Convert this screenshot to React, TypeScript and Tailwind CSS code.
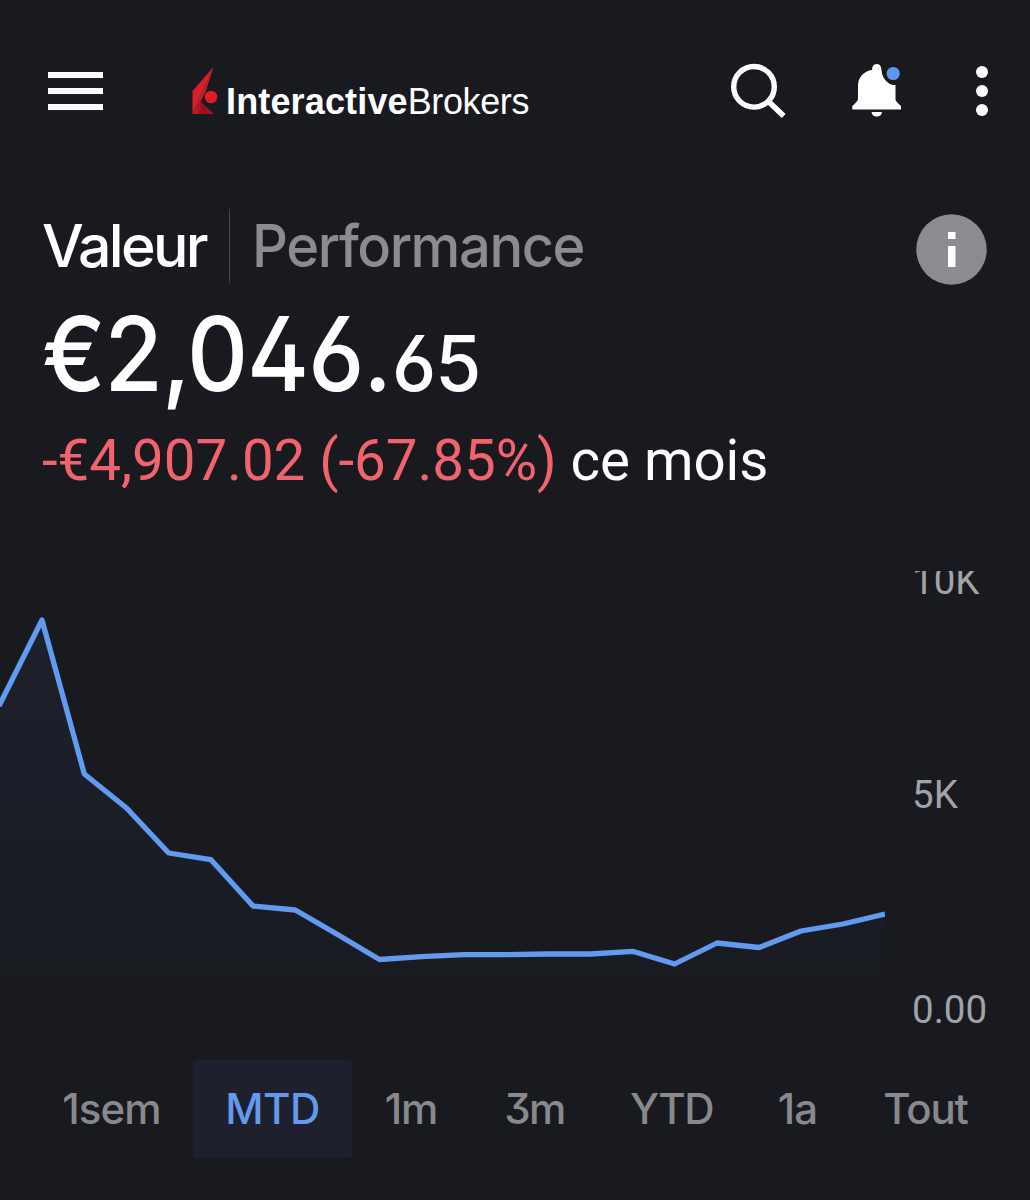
const POINTS: [number, number][] = [
  [-1, 706], [42, 620], [84.3, 774], [126.5, 808], [168.7, 853], [211, 859.7], [253, 906],
  [295.3, 910], [337.5, 934.5], [379.5, 959.5], [421.7, 956.7], [464, 954.6], [506, 954.6],
  [548, 954], [590.5, 954], [632.6, 951.3], [674.6, 964], [717, 943], [759, 947.5],
  [801, 931], [843, 924], [885, 914],
];

const LINE = POINTS.map(([x, y]) => `${x},${y - 571}`).join(' ');

const TABS = [
  { label: '1sem', box: 'w-[163px]', text: 'tracking-[-0.9px]' },
  { label: 'MTD', box: 'w-[159px]', text: 'tracking-[-0.5px]' },
  { label: '1m', box: 'w-[118px]', text: 'tracking-[-1px]' },
  { label: '3m', box: 'w-[129px]', text: 'tracking-[-1.5px]' },
  { label: 'YTD', box: 'w-[145px]', text: 'tracking-[-1.5px]' },
  { label: '1a', box: 'w-[107px]', text: 'tracking-[-1px]' },
  { label: 'Tout', box: 'w-[149px]', text: 'tracking-[-1.2px]' },
];

function Header() {
  return (
    <header className="flex h-[182px] items-center pl-12">
      <button aria-label="Menu" className="flex w-[55px] flex-col gap-[10.5px]">
        <span className="h-[5.5px] w-full bg-white" />
        <span className="h-[5.5px] w-full bg-white" />
        <span className="h-[5.5px] w-full bg-white" />
      </button>
      <div className="ml-[89px] flex w-[360px] items-center">
        <svg width="26" height="48" viewBox="0 0 26 48" className="shrink-0">
          <defs>
            <linearGradient id="fold" x1="0" y1="0" x2="1" y2="0">
              <stop offset="0" stopColor="#d51c28" />
              <stop offset="0.5" stopColor="#8d121b" />
              <stop offset="1" stopColor="#b5151f" />
            </linearGradient>
          </defs>
          <path d="M21.5 0 L0.5 24 V47 Z" fill="#d81f2a" />
          <path d="M21.5 0 L14 24 L8.5 34.5 L0.5 47 Z" fill="#b9202b" />
          <path d="M8.5 34 L21.5 47 H0.5 Z" fill="url(#fold)" />
          <circle cx="19" cy="30" r="6.3" fill="#e01b25" />
        </svg>
        <div className="mt-[22px] ml-2 flex font-['Liberation_Sans',sans-serif] text-[36px] leading-10 whitespace-nowrap text-white">
          <span className="font-bold tracking-[0.15px]">Interactive</span>
          <span className="tracking-[-0.4px]">Brokers</span>
        </div>
      </div>
      <svg width="60" height="60" viewBox="728 61 60 60" className="ml-[176px] shrink-0" fill="none" stroke="#fff">
        <circle cx="754" cy="86.8" r="20.3" strokeWidth="5.4" />
        <path d="M768.5 101.5 L783.7 116" strokeWidth="5.6" />
      </svg>
      <svg width="54" height="60" viewBox="850 61 54 60" className="ml-[62px] shrink-0">
        <path
          d="M872 70 Q872 64 876.5 64 Q881 64 881.3 69 Q882 79 889 83.5 Q892 85.2 895.5 85 V100 Q896 101.5 901 106 V109.5 H852.3 V106 Q857.5 101.5 858 99 V86 C858 77 864 71 872 70 Z"
          fill="#fff"
        />
        <path d="M871.5 112 H882 A5.3 5.3 0 0 1 871.5 112 Z" fill="#fff" />
        <circle cx="893.2" cy="73.5" r="6.6" fill="#5c97f0" />
      </svg>
      <button aria-label="Plus" className="ml-[72px] flex flex-col gap-[7.6px]">
        <span className="size-[11.5px] rounded-full bg-white" />
        <span className="size-[11.5px] rounded-full bg-white" />
        <span className="size-[11.5px] rounded-full bg-white" />
      </button>
    </header>
  );
}

function Summary() {
  return (
    <section className="mt-[27px] pl-[42px] font-['Inter',sans-serif] whitespace-nowrap text-white">
      <div className="flex h-[74px] items-center text-[59px] leading-[74px] font-medium">
        <span className="w-[187px] tracking-[-2.7px]">Valeur</span>
        <span className="h-[74px] w-px shrink-0 bg-[#45464b]" />
        <span className="ml-[22px] w-[638px] origin-left scale-x-[0.95] tracking-[-1.5px] text-[#8b8c90]">Performance</span>
        <svg width="71" height="71" viewBox="0 0 71 71" className="mt-[7px] ml-[26px] shrink-0">
          <circle cx="35.5" cy="35.5" r="35.2" fill="#8b8c90" />
          <path d="M32 18 H39.5 V25 H32 Z M32 32 H39.5 V53 H32 Z" fill="#fff" />
        </svg>
      </div>
      <div className="mt-[26px] flex h-[89px] items-baseline text-[103px] leading-[89px] font-medium [font-feature-settings:'ss01']">
        <span className="w-[350px] origin-left scale-x-[0.92] tracking-[-1.2px]">€2,046.</span>
        <span className="origin-left scale-x-[0.97] text-[77px] tracking-[-1px]">65</span>
      </div>
      <div className="mt-[33px] h-[60px] font-['Roboto',sans-serif] text-[56.5px] leading-[60px] tracking-[-0.06px]">
        <span className="text-[#f0636f]">-€4,907.02 (-67.85%)</span>
        <span> ce mois</span>
      </div>
    </section>
  );
}

function Chart() {
  return (
    <section className="mt-[80px] flex h-[469px] overflow-hidden">
      <svg width="885" height="469" viewBox="0 0 885 469" className="shrink-0">
        <defs>
          <linearGradient id="area" x1="0" y1="49" x2="0" y2="469" gradientUnits="userSpaceOnUse">
            <stop offset="0" stopColor="#1e212d" />
            <stop offset="0.7" stopColor="#181c24" />
            <stop offset="0.86" stopColor="#191b20" />
            <stop offset="1" stopColor="#191a1f" />
          </linearGradient>
        </defs>
        <polygon points={`${LINE} 885,469 0,469`} fill="url(#area)" />
        <polyline points={LINE} fill="none" stroke="#629aee" strokeWidth="5.3" strokeLinejoin="round" />
      </svg>
      <div className="-mt-[10.5px] ml-[27px] flex flex-col gap-[174.5px] font-['Roboto',sans-serif] text-[38.5px] leading-10 text-[#a2a3a7]">
        <span>10K</span>
        <span>5K</span>
        <span>0.00</span>
      </div>
    </section>
  );
}

function Tabs() {
  return (
    <nav className="mt-5 flex h-[98px] pl-[30px] font-['Inter',sans-serif] text-[42px] font-medium [font-feature-settings:'cv09']">
      {TABS.map(({ label, box, text }) => (
        <button
          key={label}
          className={`${box} ${text} flex h-full items-center justify-center rounded-[4px] pb-[2px] ${
            label === 'MTD' ? 'bg-[#1e212d] text-[#6499ec]' : 'text-[#88898c]'
          }`}
        >
          {label}
        </button>
      ))}
    </nav>
  );
}

export default function App() {
  return (
    <main className="h-[1200px] w-[1030px] overflow-hidden bg-[#191a1f]">
      <Header />
      <Summary />
      <Chart />
      <Tabs />
    </main>
  );
}
